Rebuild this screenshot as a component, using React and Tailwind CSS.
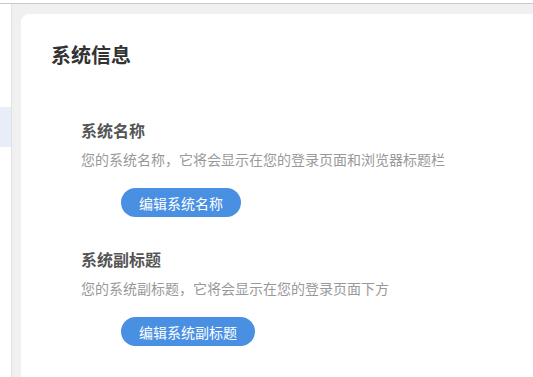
import React from 'react';

const Section = ({ title, desc, action }) => (
  <div className="pl-[30px]">
    <h3 className="text-[16px] leading-[16px] font-bold text-[#555]">{title}</h3>
    <p className="mt-[14px] text-[14px] leading-[14px] text-[#999]">{desc}</p>
    <button className="ml-[40px] mt-[22px] h-[29px] px-[18px] rounded-full bg-[#4a90e2] text-white text-[14px] leading-[14px]">
      {action}
    </button>
  </div>
);

export default function App() {
  return (
    <div
      className="h-[377px] w-[533px] overflow-hidden bg-white flex flex-col"
      style={{ fontFamily: '"Noto Sans CJK SC", "Liberation Sans", sans-serif' }}
    >
      <div className="h-[4px] bg-white border-b border-[#c8c8c8] shrink-0" />
      <div className="flex flex-1 min-h-0 bg-[#f0f0f0]">
        {/* sidebar sliver */}
        <div className="w-[12px] shrink-0 bg-white border-r border-[#e2e2e2] pt-[103px]">
          <div className="h-[40px] bg-[#e8eef8]" />
        </div>
        <div className="flex-1 pl-[9px] pt-[10px]">
          <div className="h-full bg-white rounded-tl-[8px] pl-[30px] pt-[31px]">
            <h2 className="text-[20px] leading-[20px] font-bold text-[#333]">系统信息</h2>
            <div className="mt-[57px]">
              <Section
                title="系统名称"
                desc="您的系统名称，它将会显示在您的登录页面和浏览器标题栏"
                action="编辑系统名称"
              />
            </div>
            <div className="mt-[34px]">
              <Section
                title="系统副标题"
                desc="您的系统副标题，它将会显示在您的登录页面下方"
                action="编辑系统副标题"
              />
            </div>
          </div>
        </div>
      </div>
    </div>
  );
}
